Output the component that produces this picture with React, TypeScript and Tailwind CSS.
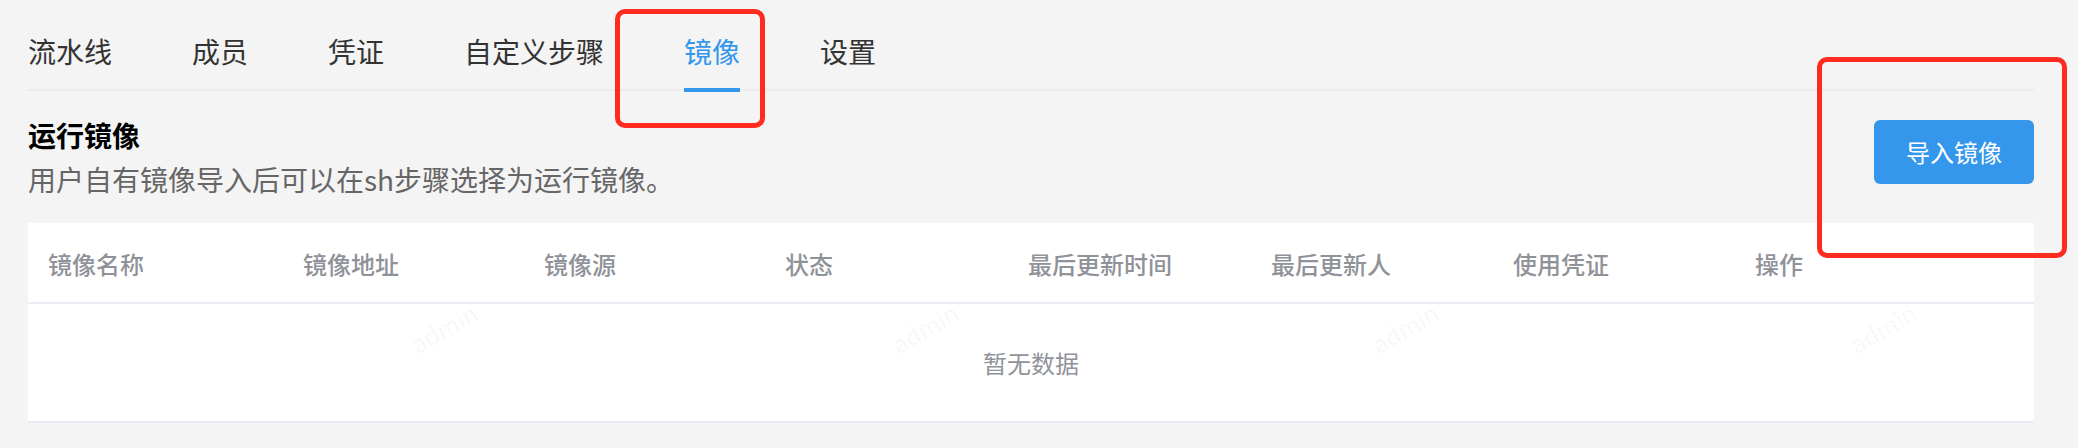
import React from 'react';

const tabs = ['流水线', '成员', '凭证', '自定义步骤', '镜像', '设置'];

const columns = [
  { label: '镜像名称', w: 'w-[255px]' },
  { label: '镜像地址', w: 'w-[241px]' },
  { label: '镜像源', w: 'w-[241px]' },
  { label: '状态', w: 'w-[243px]' },
  { label: '最后更新时间', w: 'w-[243px]' },
  { label: '最后更新人', w: 'w-[242px]' },
  { label: '使用凭证', w: 'w-[242px]' },
  { label: '操作', w: 'flex-1' },
];

const marks = ['left-[380px]', 'left-[861px]', 'left-[1341px]', 'left-[1819px]'];

export default function App() {
  return (
    <div
      className="relative w-[2078px] h-[448px] overflow-hidden bg-[#f4f4f4] pl-[28px] pr-[44px]"
      style={{ fontFamily: '"Noto Sans CJK SC", "Noto Sans", sans-serif' }}
    >
      {/* tabs */}
      <div className="flex h-[91px] gap-[80px] border-b-2 border-[#ececec]">
        {tabs.map((t) => {
          const active = t === '镜像';
          return (
            <div key={t} className="relative h-full pt-[36px]">
              <span className={`text-[28px] leading-[30px] ${active ? 'text-[#3497ec]' : 'text-[#333333]'}`}>{t}</span>
              {active && <div className="absolute left-0 right-0 bottom-[-3px] h-[4px] bg-[#3497ec]" />}
            </div>
          );
        })}
      </div>

      {/* section header */}
      <div className="flex h-[132px] items-start justify-between">
        <div className="pt-[26px]">
          <div className="text-[28px] leading-[36px] font-bold text-black">运行镜像</div>
          <div className="mt-[6px] text-[28px] leading-[40px] text-[#666666]">用户自有镜像导入后可以在sh步骤选择为运行镜像。</div>
        </div>
        <button className="mt-[29px] h-[64px] w-[160px] rounded-[6px] bg-[#3497ec] text-[24px] text-white">导入镜像</button>
      </div>

      {/* table */}
      <div className="bg-white">
        <div className="flex h-[81px] items-center border-b-2 border-[#e9edf3] pt-[2px]">
          {columns.map((c) => (
            <div key={c.label} className={`${c.w} pl-[20px] text-[24px] font-medium text-[#8f9298]`}>
              {c.label}
            </div>
          ))}
        </div>
        <div className="relative flex h-[119px] items-center justify-center border-b-2 border-[#e9edf3]">
          {marks.map((m) => (
            <span
              key={m}
              className={`absolute ${m} top-[6px] -rotate-[30deg] text-[24px] text-[rgba(0,0,0,0.04)] select-none`}
            >
              admin
            </span>
          ))}
          <span className="text-[24px] text-[#909399]">暂无数据</span>
        </div>
      </div>

      {/* annotation boxes */}
      <div className="absolute left-[615px] top-[9px] h-[119px] w-[150px] rounded-[10px] border-[5px] border-[#ff2b1e]" />
      <div className="absolute left-[1817px] top-[57px] h-[201px] w-[250px] rounded-[10px] border-[5px] border-[#ff2b1e]" />
    </div>
  );
}
